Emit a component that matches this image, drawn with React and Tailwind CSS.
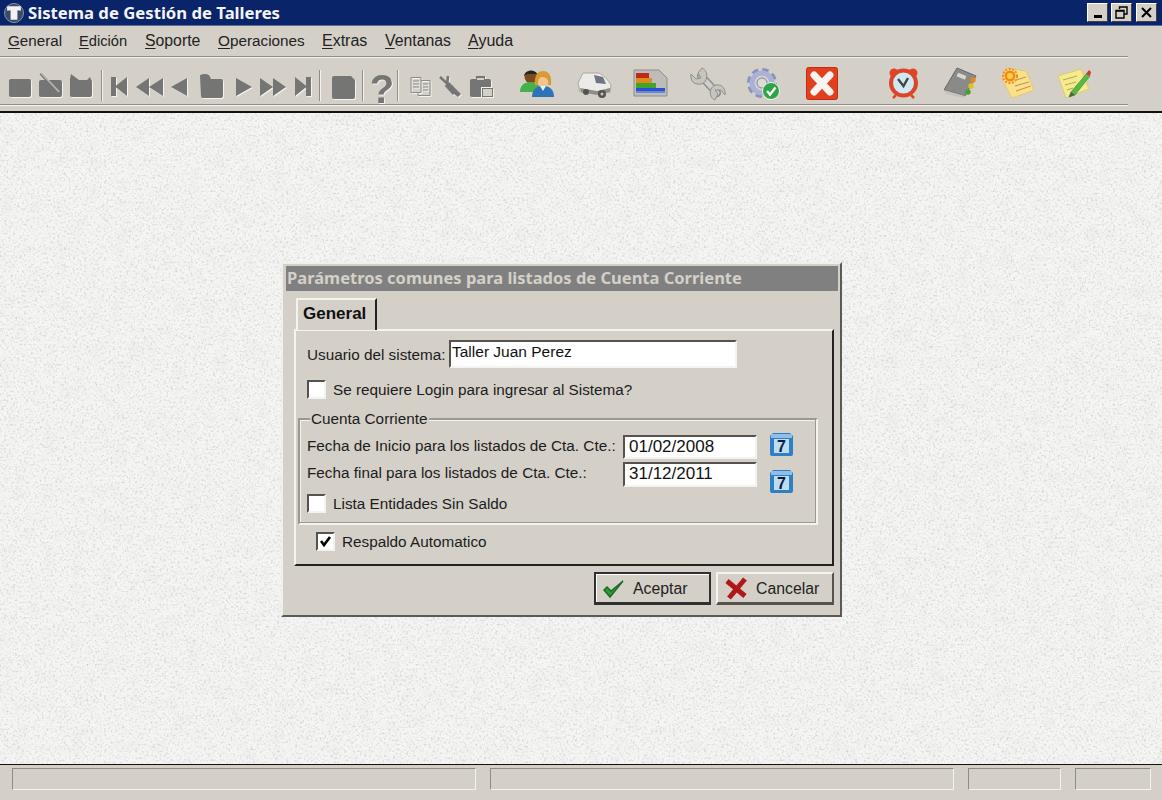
import React from 'react';

const sans = "font-['Liberation_Sans',Arial,sans-serif]";

// every toolbar glyph is drawn in a w x h box, top of the box is y=67 on the page
const Ico = ({ w, h = 37, className = '', children }) => (
  <svg width={w} height={h} viewBox={`0 0 ${w} ${h}`} className={`shrink-0 ${className}`}>
    {children}
  </svg>
);

const G = '#757573';
const off = 'drop-shadow-[1px_1px_0_#f4f3ef]';

const Sep = ({ className }) => (
  <div className={`w-[2px] h-[31px] mt-[3px] shrink-0 border-l border-l-[#8f8d88] border-r border-r-[#f4f3ef] ${className}`} />
);

const Users = () => (
  <>
    <circle cx="11" cy="10" r="6.5" fill="#7a4a22" />
    <path d="M4 9 C5 2 17 2 18 9 L16 7 H7Z" fill="#1d2a1d" />
    <path d="M0 25 C0 17 6 15 11 15 C16 15 21 18 21 25 Z" fill="#46b04a" />
    <circle cx="23" cy="13" r="6.5" fill="#f2c48e" />
    <path d="M15 18 C14 8 18 4 23 4 C29 4 32 9 31 18 L28 18 C29 13 27 10 22 10 C19 10 18 13 18 18Z" fill="#d99a34" />
    <path d="M12 30 C12 22 17 19 23 19 C29 19 34 22 34 30 Z" fill="#2f72b8" />
    <path d="M20 19 L23 24 L26 19Z" fill="#e8f0f8" />
  </>
);

const Van = () => (
  <>
    <path d="M1 16 L6 6 H21 C26 7 31 13 34 18 L33 25 H3 Z" fill="#ecebe7" stroke="#a9a8a3" />
    <path d="M17 8 L26 10 L29 17 L19 16 Z" fill="#6f7682" />
    <path d="M3 21 L20 24 L33 21 L33 25 L20 28 L4 25Z" fill="#8f8d88" />
    <circle cx="9" cy="25" r="3" fill="#55534f" />
    <circle cx="25" cy="27" r="4" fill="#55534f" />
    <circle cx="25" cy="27" r="1.5" fill="#c9c7c1" />
  </>
);

const Chart = () => (
  <>
    <path d="M1 3 H26 L34 11 V29 H1 Z" fill="#bdbcb8" stroke="#8d8c88" />
    <rect x="3" y="6" width="13" height="5" fill="#c0281e" />
    <rect x="3" y="11" width="16" height="5" fill="#e08a1c" />
    <rect x="3" y="16" width="20" height="5" fill="#3da52e" />
    <rect x="3" y="21" width="29" height="3" fill="#2d4fd0" />
    <rect x="3" y="24" width="29" height="2" fill="#6a88d8" />
  </>
);

const Wrench = () => (
  <>
    <path d="M11 9 L27 26" stroke="#8f8e8a" strokeWidth="8" strokeLinecap="round" />
    <path d="M11 9 L27 26" stroke="#d0cfca" strokeWidth="5" strokeLinecap="round" />
    <path d="M12 1 L8 6 L11 11 L6 12 L1 7 C0 14 4 18 11 17 C16 16 18 10 16 5 C15 3 14 2 12 1Z" fill="#c6c5c0" stroke="#8f8e8a" />
    <path d="M25 33 L28 27 L25 23 L31 23 L35 28 C36 22 32 17 26 18 C21 19 19 25 21 29 C22 31 23 32 25 33Z" fill="#c6c5c0" stroke="#8f8e8a" />
  </>
);

const Gear = () => (
  <>
    <circle cx="15" cy="16" r="12.5" fill="none" stroke="#8b90bd" strokeWidth="5" strokeDasharray="6 3.8" />
    <circle cx="15" cy="16" r="10" fill="none" stroke="#aab0d6" strokeWidth="5" />
    <circle cx="15" cy="16" r="5" fill="#dcdbd6" stroke="#7d82ad" />
    <circle cx="24" cy="24" r="8.5" fill="#2fa444" stroke="#eef4ee" />
    <path d="M20 24 L23 27.5 L28.5 20.5" fill="none" stroke="#fff" strokeWidth="2.4" />
  </>
);

const Close = () => (
  <>
    <rect x="0.5" y="0.5" width="31" height="32" rx="2" fill="#e0401e" stroke="#c22a12" />
    <path d="M8 8 L24 25 M24 8 L8 25" stroke="#fbf4f0" strokeWidth="7" strokeLinecap="round" />
  </>
);

const Clock = () => (
  <>
    <circle cx="6" cy="6" r="4.5" fill="#e0452a" />
    <circle cx="25" cy="6" r="4.5" fill="#e0452a" />
    <circle cx="15.5" cy="16" r="12.5" fill="#cfe8f4" stroke="#dd4528" strokeWidth="4" />
    <path d="M10 12 L15.5 19 L20 11" fill="none" stroke="#444" strokeWidth="2.4" />
    <path d="M8 28 L5 31 M23 28 L26 31" stroke="#dd4528" strokeWidth="2.5" />
  </>
);

const Book = () => (
  <>
    <path d="M0 23 L13 1 L32 9 L21 29 Z" fill="#8a8a88" stroke="#666664" />
    <path d="M0 23 L21 29 L20 31 L2 27Z" fill="#c4c3be" />
    <rect x="13" y="7" width="9" height="4" transform="rotate(22 17 9)" fill="#d7d6d1" />
    <circle cx="29" cy="13" r="2.7" fill="#e08a1c" />
    <circle cx="27" cy="19" r="2.7" fill="#e0c31c" />
    <circle cx="24" cy="25" r="2.7" fill="#3da52e" />
  </>
);

const Note = () => (
  <>
    <path d="M6 1 L26 4 L34 23 L12 31 L2 12 Z" fill="#fbe08a" stroke="#eec36a" />
    <path d="M16 13 L26 10 M15 19 L29 15 M16 24 L31 19" stroke="#b99a54" strokeWidth="1.2" />
    <circle cx="10" cy="9" r="7" fill="none" stroke="#f08a1c" strokeWidth="2" strokeDasharray="2 1.5" />
    <circle cx="10" cy="9" r="5.5" fill="#f08a1c" />
    <circle cx="10" cy="9" r="3" fill="#f9d244" />
  </>
);

const PenNote = () => (
  <>
    <path d="M1 9 L24 2 L32 22 L9 31 Z" fill="#f5ea90" stroke="#dccb66" />
    <path d="M6 13 L20 9 M8 18 L19 15 M10 23 L16 21" stroke="#b9ac54" strokeWidth="1.1" />
    <path d="M14 25 L30 6 L33 9 L18 28 L12 30 Z" fill="#58b843" stroke="#3c8a2c" strokeWidth="0.6" />
    <path d="M29 7 L32 3 L34 5 L33 9 Z" fill="#d8372a" />
    <path d="M12 30 L14 25 L18 28 Z" fill="#5a5a4a" />
  </>
);

const Toolbar = () => (
  <div className="flex h-[37px] mt-[9px] pl-[8px] blur-[0.4px]">
    <Ico w={24} className={off}><rect x="1" y="12" width="22" height="18" rx="2" fill={G} /></Ico>
    <Ico w={24} className={`ml-[7px] ${off}`}>
      <rect x="0" y="13" width="23" height="17" rx="2" fill={G} />
      <path d="M2 6 L20 25" stroke="#b5b4b0" strokeWidth="2" />
      <path d="M1 7 L19 26" stroke={G} strokeWidth="1.2" />
    </Ico>
    <Ico w={23} className={`ml-[7px] ${off}`}>
      <path d="M1 7 L9 13 H17 L20 10 L22 14 V28 Q22 30 20 30 H2 Q0 30 0 28 V12Z" fill={G} />
    </Ico>
    <Sep className="ml-[8px]" />
    <Ico w={18} className={`ml-[7px] ${off}`}>
      <rect x="1" y="10" width="5" height="19" fill={G} /><path d="M5 19.5 L17 10 V29Z" fill={G} />
    </Ico>
    <Ico w={29} className={`ml-[7px] ${off}`}>
      <path d="M1 20 L14 11 V29Z M14 20 L28 11 V29Z" fill={G} />
    </Ico>
    <Ico w={18} className={`ml-[6px] ${off}`}><path d="M1 20 L17 11 V29Z" fill={G} /></Ico>
    <Ico w={25} className={`ml-[11px] ${off}`}>
      <path d="M1 9 Q1 7 6 7 Q11 7 12 12 H22 Q24 12 24 14 V29 Q24 31 22 31 H4 Q2 31 2 29Z" fill={G} />
    </Ico>
    <Ico w={18} className={`ml-[11px] ${off}`}><path d="M17 20 L1 11 V29Z" fill={G} /></Ico>
    <Ico w={27} className={`ml-[7px] ${off}`}><path d="M26 20 L13 11 V29Z M13 20 L0 11 V29Z" fill={G} /></Ico>
    <Ico w={18} className={`ml-[7px] ${off}`}>
      <rect x="12" y="10" width="5" height="19" fill={G} /><path d="M13 19.5 L1 10 V29Z" fill={G} />
    </Ico>
    <Sep className="ml-[7px]" />
    <Ico w={25} className={`ml-[10px] ${off}`}>
      <path d="M3 9 H20 L24 13 V30 Q24 32 22 32 H3 Q1 32 1 30 V11 Q1 9 3 9Z" fill={G} />
    </Ico>
    <Sep className="ml-[6px]" />
    <Ico w={24} h={46} className={`ml-[6px] ${off}`}>
      <text x="12" y="36" textAnchor="middle" fontFamily="Liberation Sans" fontWeight="700" fontSize="40" fill={G}>?</text>
    </Ico>
    <Sep className="ml-[3px]" />
    <Ico w={21} className={`ml-[11px] ${off}`}>
      <path d="M1 10.5 H11 V25.5 H1Z M11 13.5 H20 V28.5 H8 V25.5 M3 14 H9 M3 17 H9 M3 20 H9 M13 17 H18 M13 20 H18 M13 23 H18" fill="none" stroke="#8c8b87" />
    </Ico>
    <Ico w={24} className={`ml-[7px] ${off}`}>
      <path d="M2 10 L14 21 M10 9 L9 19" stroke={G} strokeWidth="2.6" />
      <path d="M9 17 L17 26" stroke={G} strokeWidth="6" />
      <path d="M14 18 L23 27 L20 30 L12 24Z" fill={G} />
    </Ico>
    <Ico w={25} className={`ml-[7px] ${off}`}>
      <path d="M3 12 H7 V9 H16 V12 H20 Q22 12 22 14 V20 H12 V30 H3 Q1 30 1 28 V14 Q1 12 3 12Z" fill={G} />
      <rect x="8" y="11" width="7" height="2" fill="#d4d0c8" />
      <rect x="13.5" y="21.5" width="10" height="8" fill="#d4d0c8" stroke={G} />
    </Ico>
    <Ico w={34} className="ml-[26px]"><Users /></Ico>
    <Ico w={35} className="ml-[23px]"><Van /></Ico>
    <Ico w={35} className="ml-[21px]"><Chart /></Ico>
    <Ico w={36} className="ml-[22px]"><Wrench /></Ico>
    <Ico w={35} className="ml-[21px]"><Gear /></Ico>
    <Ico w={32} className="ml-[24px]"><Close /></Ico>
    <Ico w={31} className="ml-[50px]"><Clock /></Ico>
    <Ico w={34} className="ml-[25px]"><Book /></Ico>
    <Ico w={35} className="ml-[22px]"><Note /></Ico>
    <Ico w={34} className="ml-[22px]"><PenNote /></Ico>
  </div>
);

const menus = [
  ['G', 'eneral', 'w-[54px] text-[15.2px]'],
  ['E', 'dición', 'w-[49px] text-[14.7px]'],
  ['S', 'oporte', 'w-[56px] text-[15.8px]'],
  ['O', 'peraciones', 'w-[87px] text-[15.3px]'],
  ['E', 'xtras', 'w-[46px] text-[16px]'],
  ['V', 'entanas', 'w-[66px] text-[15.8px]'],
  ['A', 'yuda', 'w-[45px] text-[16px]'],
];

const WinBtn = ({ className = '', children }) => (
  <div className={`w-[21px] h-[19px] bg-[#d4d0c8] border border-t-[#fff] border-l-[#fff] border-r-[#404040] border-b-[#404040] flex items-center justify-center ${className}`}>
    {children}
  </div>
);

const Sunken = ({ className = '', children }) => (
  <div className={`bg-white border-2 border-t-[#55534f] border-l-[#55534f] border-r-[#f4f3ef] border-b-[#f4f3ef] ${className}`}>
    {children}
  </div>
);

const CheckBox = ({ checked, className = '' }) => (
  <Sunken className={`w-[19px] h-[19px] shrink-0 flex items-center justify-center ${className}`}>
    {checked && (
      <svg width="13" height="13" viewBox="0 0 13 13">
        <path d="M2 6 L5 10 L11 2" fill="none" stroke="#000" strokeWidth="2.6" />
      </svg>
    )}
  </Sunken>
);

const Calendar = ({ className = '' }) => (
  <svg width="23" height="23" viewBox="0 0 23 23" className={`shrink-0 ${className}`}>
    <path d="M3 0 H20 L23 3 V21 Q23 23 21 23 H2 Q0 23 0 21 V3Z" fill="#2f7fc4" />
    <rect x="1" y="1" width="21" height="4" fill="#8fbfe6" />
    <rect x="4" y="6" width="15" height="14" fill="#bcdcf2" />
    <text x="11.5" y="18.5" textAnchor="middle" fontFamily="Liberation Sans" fontWeight="700" fontSize="16" fill="#0c1c40">7</text>
  </svg>
);

const Button = ({ isDefault, icon, label, className = '' }) => (
  <div
    className={`h-[33px] flex items-center pt-[2px] bg-[#d4d0c8] text-[15.8px] text-[#222] ${className} ${
      isDefault
        ? 'border-2 border-[#303030] border-b-[3px] shadow-[inset_1px_1px_0_#fff]'
        : 'border-2 border-t-[#f4f3ef] border-l-[#f4f3ef] border-r-[#55534f] border-b-[#55534f] border-b-[3px]'
    }`}
  >
    {icon}
    {label}
  </div>
);

const App = () => {
  return (
    <div className={`w-[1162px] h-[800px] overflow-hidden flex flex-col bg-[#d4d0c8] text-[#1c1c1c] ${sans}`}>
      {/* title bar */}
      <div className="h-[26px] shrink-0 bg-[#0a246a] flex items-center pl-[4px] pr-[5px] border-b border-b-[#5a6c98]">
        <div className="w-[20px] h-[20px] rounded-full bg-[#3a4a6a] border border-[#8a94aa] flex items-center justify-center">
          <svg width="16" height="16" viewBox="0 0 14 14">
            <path d="M1 1 H13 V5 L10 4.5 V13 H4 V4.5 L1 5Z" fill="#f2f2f2" />
          </svg>
        </div>
        <div className="ml-[4px] text-[#f4f4f4] font-bold text-[16.7px] font-['Noto_Sans',sans-serif] whitespace-nowrap">Sistema de Gestión de Talleres</div>
        <div className="ml-auto flex">
          <WinBtn>
            <div className="w-[8px] h-[3px] bg-black mt-[8px]" />
          </WinBtn>
          <WinBtn className="ml-[3px]">
            <svg width="13" height="13" viewBox="0 0 13 13">
              <path d="M4.5 3 V1 H12 V8 H9.5 M1 4.5 H9 V12 H1Z M1 5 H9" fill="none" stroke="#000" strokeWidth="1.4" />
            </svg>
          </WinBtn>
          <WinBtn className="ml-[4px]">
            <svg width="13" height="13" viewBox="0 0 13 13">
              <path d="M2 2 L11 11 M11 2 L2 11" stroke="#000" strokeWidth="2" />
            </svg>
          </WinBtn>
        </div>
      </div>

      {/* menu */}
      <div className="h-[29px] shrink-0 flex items-center gap-[17px] pl-[8px] pt-[1px] text-[#222]">
        {menus.map(([first, rest, size], idx) => (
          <span key={idx} className={`whitespace-nowrap ${size}`}>
            <span className="underline underline-offset-2">{first}</span>
            {rest}
          </span>
        ))}
      </div>
      <div className="w-[1128px] h-[2px] shrink-0 border-t border-t-[#8f8d88] border-b border-b-[#f4f3ef] mt-[1px]" />

      <Toolbar />

      <div className="w-[1128px] h-[2px] shrink-0 border-t border-t-[#8f8d88] border-b border-b-[#f4f3ef]" />
      <div className="h-[7px] shrink-0 border-b-2 border-b-[#111]" />

      {/* textured desktop */}
      <div className="relative h-[651px] shrink-0 bg-[#f5f5f4] pt-[149px] pl-[281px]">
        <svg className="absolute inset-0" width="1162" height="651">
          <filter id="paper" x="0" y="0" width="100%" height="100%">
            <feTurbulence type="fractalNoise" baseFrequency="0.45" numOctaves="3" seed="7" />
            <feColorMatrix type="matrix" values="0 0 0 0 0.6  0 0 0 0 0.6  0 0 0 0 0.59  2.2 0 0 0 -1.1" />
          </filter>
          <filter id="mottle" x="0" y="0" width="100%" height="100%">
            <feTurbulence type="fractalNoise" baseFrequency="0.07" numOctaves="2" seed="3" />
            <feColorMatrix type="matrix" values="0 0 0 0 0.75  0 0 0 0 0.75  0 0 0 0 0.75  0.6 0 0 0 -0.26" />
          </filter>
          <rect width="1162" height="651" filter="url(#mottle)" />
          <rect width="1162" height="651" filter="url(#paper)" />
        </svg>

        {/* dialog */}
        <div className="relative w-[561px] h-[355px] bg-[#d4d0c8] border-2 border-t-[#f0efea] border-l-[#f0efea] border-r-[#5a5a58] border-b-[#5a5a58] pt-[2px] pl-[3px] pr-[2px]">
          <div className="h-[25px] bg-[#808080] flex items-center pl-[1px] text-[#d4d0c8] font-bold text-[16.5px] font-['Noto_Sans',sans-serif] whitespace-nowrap">
            Parámetros comunes para listados de Cuenta Corriente
          </div>

          <div className="relative z-10 w-[81px] h-[32px] ml-[10px] mt-[7px] -mb-[1px] bg-[#d4d0c8] border-t-2 border-t-[#f4f3ef] border-l-2 border-l-[#f4f3ef] border-r-2 border-r-[#222] flex items-center pl-[5px] pb-[2px] text-[17px] font-bold text-[#111]">
            General
          </div>

          <div className="w-[540px] h-[237px] ml-[8px] border-2 border-t-[#f4f3ef] border-l-[#f4f3ef] border-r-[#222] border-b-[#222] pt-[9px] text-[15.3px]">
            <div className="flex items-center pl-[11px]">
              <div className="w-[142px] whitespace-nowrap pt-[3px]">Usuario del sistema:</div>
              <Sunken className="w-[288px] h-[28px] pl-[1px] text-[15.5px] text-[#111] leading-[20px]">Taller Juan Perez</Sunken>
            </div>

            <div className="flex items-center pl-[11px] mt-[12px] gap-[7px] leading-[19px]">
              <CheckBox />
              <span className="whitespace-nowrap">Se requiere Login para ingresar al Sistema?</span>
            </div>

            <div className="relative w-[520px] h-[107px] ml-[2px] mt-[19px] border-2 border-t-[#9a9892] border-l-[#9a9892] border-r-[#f4f3ef] border-b-[#f4f3ef] pt-[15px] pl-[7px] shadow-[inset_-1px_-1px_0_#9a9892,inset_1px_1px_0_#f4f3ef]">
              <div className="absolute -top-[10px] left-[10px] px-[1px] bg-[#d4d0c8] leading-[18px] whitespace-nowrap">Cuenta Corriente</div>

              <div className="flex items-start">
                <div className="w-[316px] leading-[20px] pt-[1px] whitespace-nowrap">Fecha de Inicio para los listados de Cta. Cte.:</div>
                <Sunken className="w-[134px] h-[24px] pl-[4px] leading-[20px] text-[17px] text-[#111]">01/02/2008</Sunken>
                <Calendar className="ml-[13px] -mt-[2px]" />
              </div>
              <div className="flex items-start mt-[3px]">
                <div className="w-[316px] leading-[20px] pt-[1px] whitespace-nowrap">Fecha final para los listados de Cta. Cte.:</div>
                <Sunken className="w-[134px] h-[25px] pl-[4px] leading-[20px] text-[17px] text-[#111]">31/12/2011</Sunken>
                <Calendar className="ml-[13px] mt-[8px] -mb-[6px]" />
              </div>
              <div className="flex items-center mt-[7px] gap-[7px] leading-[19px]">
                <CheckBox />
                <span className="whitespace-nowrap">Lista Entidades Sin Saldo</span>
              </div>
            </div>

            <div className="flex items-center ml-[20px] mt-[7px] gap-[7px] leading-[19px]">
              <CheckBox checked />
              <span className="whitespace-nowrap">Respaldo Automatico</span>
            </div>
          </div>

          <div className="flex ml-[308px] mt-[6px] gap-[5px]">
            <Button
              isDefault
              className="w-[117px]"
              label="Aceptar"
              icon={
                <svg width="24" height="24" viewBox="0 0 24 24" className="ml-[6px] mr-[7px]">
                  <path d="M2 13 L8 20 L21 4 L9 14 L5 10Z" fill="#2f9a34" stroke="#1f6a2a" strokeWidth="1.5" />
                </svg>
              }
            />
            <Button
              className="w-[118px]"
              label="Cancelar"
              icon={
                <svg width="24" height="24" viewBox="0 0 24 24" className="ml-[6px] mr-[8px]">
                  <path d="M3 4 L21 19 M21 2 L5 21" stroke="#b01818" strokeWidth="5" />
                </svg>
              }
            />
          </div>
        </div>
      </div>

      {/* status bar */}
      <div className="flex-1 flex pl-[12px] pt-[3px] gap-[14px] border-t border-t-[#111]">
        <div className="w-[464px] h-[22px] border border-t-[#8f8d88] border-l-[#8f8d88] border-r-[#f4f3ef] border-b-[#f4f3ef]" />
        <div className="w-[464px] h-[22px] border border-t-[#8f8d88] border-l-[#8f8d88] border-r-[#f4f3ef] border-b-[#f4f3ef]" />
        <div className="w-[93px] h-[22px] border border-t-[#8f8d88] border-l-[#8f8d88] border-r-[#f4f3ef] border-b-[#f4f3ef]" />
        <div className="w-[76px] h-[22px] border border-t-[#8f8d88] border-l-[#8f8d88] border-r-[#f4f3ef] border-b-[#f4f3ef]" />
      </div>
    </div>
  );
};

export default App;
